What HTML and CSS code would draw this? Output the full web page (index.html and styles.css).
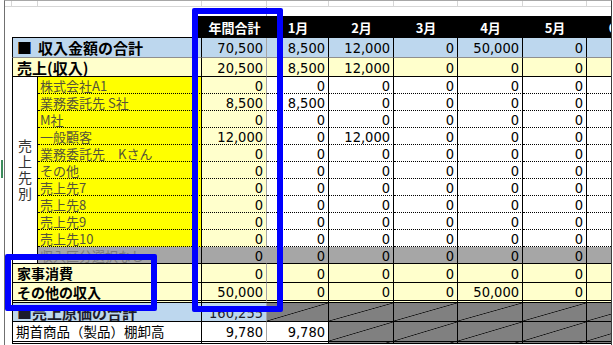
FILE: index.html
```html
<!DOCTYPE html>
<html lang="ja">
<head>
<meta charset="utf-8">
<title>収入金額の合計</title>
<link rel="stylesheet" href="styles.css">
</head>
<body>
<div class="page">
  <div class="edge"><div class="edge-mark"></div></div>
  <div class="frame">
    <div class="sheet">
      <!-- top gridline strip -->
      <div class="g"></div><div class="g"></div><div class="g"></div><div class="g"></div><div class="g"></div>
      <div class="g"></div><div class="g"></div><div class="g"></div><div class="g"></div><div class="g"></div>
      <!-- blank row -->
      <div class="blank-l"></div><div class="blank-c"></div><div class="blank-r"></div>
      <!-- header -->
      <div class="h-gutter"></div><div class="h-corner"></div>
      <div class="hd hd-first">年間合計</div><div class="hd">1月</div><div class="hd">2月</div><div class="hd">3月</div><div class="hd">4月</div><div class="hd">5月</div><div class="hd">6月</div>

      <!-- 収入金額の合計 -->
      <div class="c first blue b15 gb"><span class="sq">■</span>収入金額の合計</div>
      <div class="c n blue t gb">70,500</div><div class="c n blue gb">8,500</div><div class="c n blue gb">12,000</div><div class="c n blue gb">0</div><div class="c n blue gb">50,000</div><div class="c n blue gb">0</div><div class="c n blue gb">0</div>

      <!-- 売上(収入) -->
      <div class="c first ly b15">売上(収入)</div>
      <div class="c n ly t">20,500</div><div class="c n ly">8,500</div><div class="c n ly">12,000</div><div class="c n ly">0</div><div class="c n ly">0</div><div class="c n ly">0</div><div class="c n ly">0</div>

      <!-- 売上先別 -->
      <div class="c side"><span class="vert">売上先別</span></div>

      <div class="c yl dot">株式会社A1</div>
      <div class="c n t dot">0</div><div class="c n dot">0</div><div class="c n dot">0</div><div class="c n dot">0</div><div class="c n dot">0</div><div class="c n dot">0</div><div class="c n dot">0</div>

      <div class="c yl dot">業務委託先 S社</div>
      <div class="c n t dot">8,500</div><div class="c n dot">8,500</div><div class="c n dot">0</div><div class="c n dot">0</div><div class="c n dot">0</div><div class="c n dot">0</div><div class="c n dot">0</div>

      <div class="c yl dot">M社</div>
      <div class="c n t dot">0</div><div class="c n dot">0</div><div class="c n dot">0</div><div class="c n dot">0</div><div class="c n dot">0</div><div class="c n dot">0</div><div class="c n dot">0</div>

      <div class="c yl dot">一般顧客</div>
      <div class="c n t dot">12,000</div><div class="c n dot">0</div><div class="c n dot">12,000</div><div class="c n dot">0</div><div class="c n dot">0</div><div class="c n dot">0</div><div class="c n dot">0</div>

      <div class="c yl dot">業務委託先　Kさん</div>
      <div class="c n t dot">0</div><div class="c n dot">0</div><div class="c n dot">0</div><div class="c n dot">0</div><div class="c n dot">0</div><div class="c n dot">0</div><div class="c n dot">0</div>

      <div class="c yl dot">その他</div>
      <div class="c n t dot">0</div><div class="c n dot">0</div><div class="c n dot">0</div><div class="c n dot">0</div><div class="c n dot">0</div><div class="c n dot">0</div><div class="c n dot">0</div>

      <div class="c yl dot">売上先7</div>
      <div class="c n t dot">0</div><div class="c n dot">0</div><div class="c n dot">0</div><div class="c n dot">0</div><div class="c n dot">0</div><div class="c n dot">0</div><div class="c n dot">0</div>

      <div class="c yl dot">売上先8</div>
      <div class="c n t dot">0</div><div class="c n dot">0</div><div class="c n dot">0</div><div class="c n dot">0</div><div class="c n dot">0</div><div class="c n dot">0</div><div class="c n dot">0</div>

      <div class="c yl dot">売上先9</div>
      <div class="c n t dot">0</div><div class="c n dot">0</div><div class="c n dot">0</div><div class="c n dot">0</div><div class="c n dot">0</div><div class="c n dot">0</div><div class="c n dot">0</div>

      <div class="c yl dot">売上先10</div>
      <div class="c n t dot">0</div><div class="c n dot">0</div><div class="c n dot">0</div><div class="c n dot">0</div><div class="c n dot">0</div><div class="c n dot">0</div><div class="c n dot">0</div>

      <div class="c yl gr gr-text">収入区分選択なし</div>
      <div class="c n t gr">0</div><div class="c n gr">0</div><div class="c n gr">0</div><div class="c n gr">0</div><div class="c n gr">0</div><div class="c n gr">0</div><div class="c n gr">0</div>

      <!-- 家事消費 -->
      <div class="c first ly b14">家事消費</div>
      <div class="c n ly t">0</div><div class="c n ly">0</div><div class="c n ly">0</div><div class="c n ly">0</div><div class="c n ly">0</div><div class="c n ly">0</div><div class="c n ly">0</div>

      <!-- その他の収入 -->
      <div class="c first ly b14 dbl">その他の収入</div>
      <div class="c n ly t dbl">50,000</div><div class="c n ly dbl">0</div><div class="c n ly dbl">0</div><div class="c n ly dbl">0</div><div class="c n ly dbl">50,000</div><div class="c n ly dbl">0</div><div class="c n ly dbl">0</div>

      <!-- 売上原価の合計 -->
      <div class="c first blue b15 dark">■売上原価の合計</div>
      <div class="c n blue t dark">160,255</div><div class="c hatch"></div><div class="c hatch"></div><div class="c hatch"></div><div class="c hatch"></div><div class="c hatch"></div><div class="c hatch"></div>

      <!-- 期首商品(製品)棚卸高 -->
      <div class="c first plain dbl">期首商品（製品）棚卸高</div>
      <div class="c n t wt dbl">9,780</div><div class="c n dbl">9,780</div><div class="c hatch dbl"></div><div class="c hatch dbl"></div><div class="c hatch dbl"></div><div class="c hatch dbl"></div><div class="c hatch dbl"></div>
    </div>

    <div class="hl hl-total"></div>
    <div class="hl hl-other"></div>
  </div>
</div>
</body>
</html>
```

FILE: styles.css
```css
html, body {
  margin: 0;
  padding: 0;
  background: #fff;
}

.page {
  display: flex;
  width: 613px;
  height: 345px;
  overflow: hidden;
}

.edge {
  flex: none;
  width: 4px;
  display: flex;
  flex-direction: column;
}

.edge-mark {
  margin-top: 160px;
  margin-left: 1px;
  width: 2px;
  height: 18px;
  background: #3c8c5c;
}

.frame {
  position: relative;
  flex: none;
  box-sizing: border-box;
  width: 608px;
  height: 345px;
  border-top: 1px solid #a8a8a8;
  border-left: 1px solid #707070;
  border-right: 1px solid #3c3c3c;
  overflow: hidden;
}

.sheet {
  display: grid;
  width: 646px;
  grid-template-columns: 7px 26px 164px 65px 62px 65px 64px 65px 64px 64px;
  grid-template-rows: 6px 9px 22px 20px 19px repeat(11, 17px) 19px 20px 19px 22px;
  font-family: "Noto Sans CJK JP", "Noto Sans", sans-serif;
  color: #000;
}

/* top gridline strip */
.g {
  box-sizing: border-box;
  border-right: 1px solid #d6d6d6;
  border-bottom: 1px solid #d6d6d6;
}

.blank-l { grid-column: 1 / 4; }
.blank-c {
  box-sizing: border-box;
  border-right: 1px solid #a6a6a6;
}
.blank-r { grid-column: 5 / 11; }

.h-gutter { grid-column: 1 / 2; }
.h-corner {
  grid-column: 2 / 4;
  box-sizing: border-box;
  border-bottom: 1px solid #000;
}

.hd {
  display: flex;
  align-items: center;
  justify-content: center;
  padding-top: 1px;
  box-sizing: border-box;
  background: #000;
  color: #fff;
  font-weight: bold;
  font-size: 13px;
  line-height: 15px;
  white-space: nowrap;
}

.hd-first {
  box-shadow: -4px 0 0 #000;
}

/* cells */
.c {
  box-sizing: border-box;
  display: flex;
  align-items: center;
  min-width: 0;
  overflow: hidden;
  white-space: nowrap;
  line-height: 15px;
  border-right: 1px solid #000;
  border-bottom: 1px solid #000;
  background: #fff;
}

.n {
  justify-content: flex-end;
  padding-right: 3px;
  padding-top: 2px;
  font-family: "Liberation Sans Narrow", "DejaVu Sans Condensed", "Liberation Sans", sans-serif;
  font-size: 14.5px;
}

.first {
  grid-column: 2 / 4;
  border-left: 1px solid #000;
  padding-left: 4px;
}

.b15 {
  font-weight: bold;
  font-size: 15px;
  line-height: 17px;
}

.b14 {
  font-weight: bold;
  font-size: 14px;
  line-height: 16px;
}

.sq {
  margin-right: 6px;
}

.blue { background: #bdd7ee; }
.ly { background: #ffffcc; }
.t {
  background: #ffffcc;
  border-right-color: #a6a6a6;
}
.blue.t { background: #bdd7ee; }
.t.wt { background: #fff; }

.gb { border-bottom-color: #8f8f8f; }
.dot { border-bottom: 1px dotted #000; }
.dbl { border-bottom: 3px double #000; }

.side {
  grid-column: 2 / 3;
  grid-row: 6 / span 11;
  border-left: 1px solid #000;
  justify-content: center;
}

.vert {
  writing-mode: vertical-rl;
  text-orientation: upright;
  font-size: 14px;
  line-height: 16px;
  letter-spacing: 2px;
  color: #333;
  margin-top: 2px;
}

.yl {
  grid-column: 3 / 4;
  background: #ffff00;
  color: #55533a;
  font-size: 13px;
  padding-left: 2px;
}

.gr { background: #a6a6a6; }
.gr-text { color: #7c7c7c; }

.dark { color: #1c1c2c; }

.plain {
  font-size: 13.5px;
  padding-left: 3px;
}

.hatch {
  background: linear-gradient(to bottom right, #808080 calc(50% - 0.7px), #111 50%, #808080 calc(50% + 0.7px));
}

/* annotation rectangles */
.hl {
  position: absolute;
  box-sizing: border-box;
  border: 6px solid #0000ff;
  border-radius: 2px;
  pointer-events: none;
}

.hl-total {
  left: 187px;
  top: 7px;
  width: 91px;
  height: 304px;
}

.hl-other {
  left: 0;
  top: 253px;
  width: 152px;
  height: 57px;
}
```
